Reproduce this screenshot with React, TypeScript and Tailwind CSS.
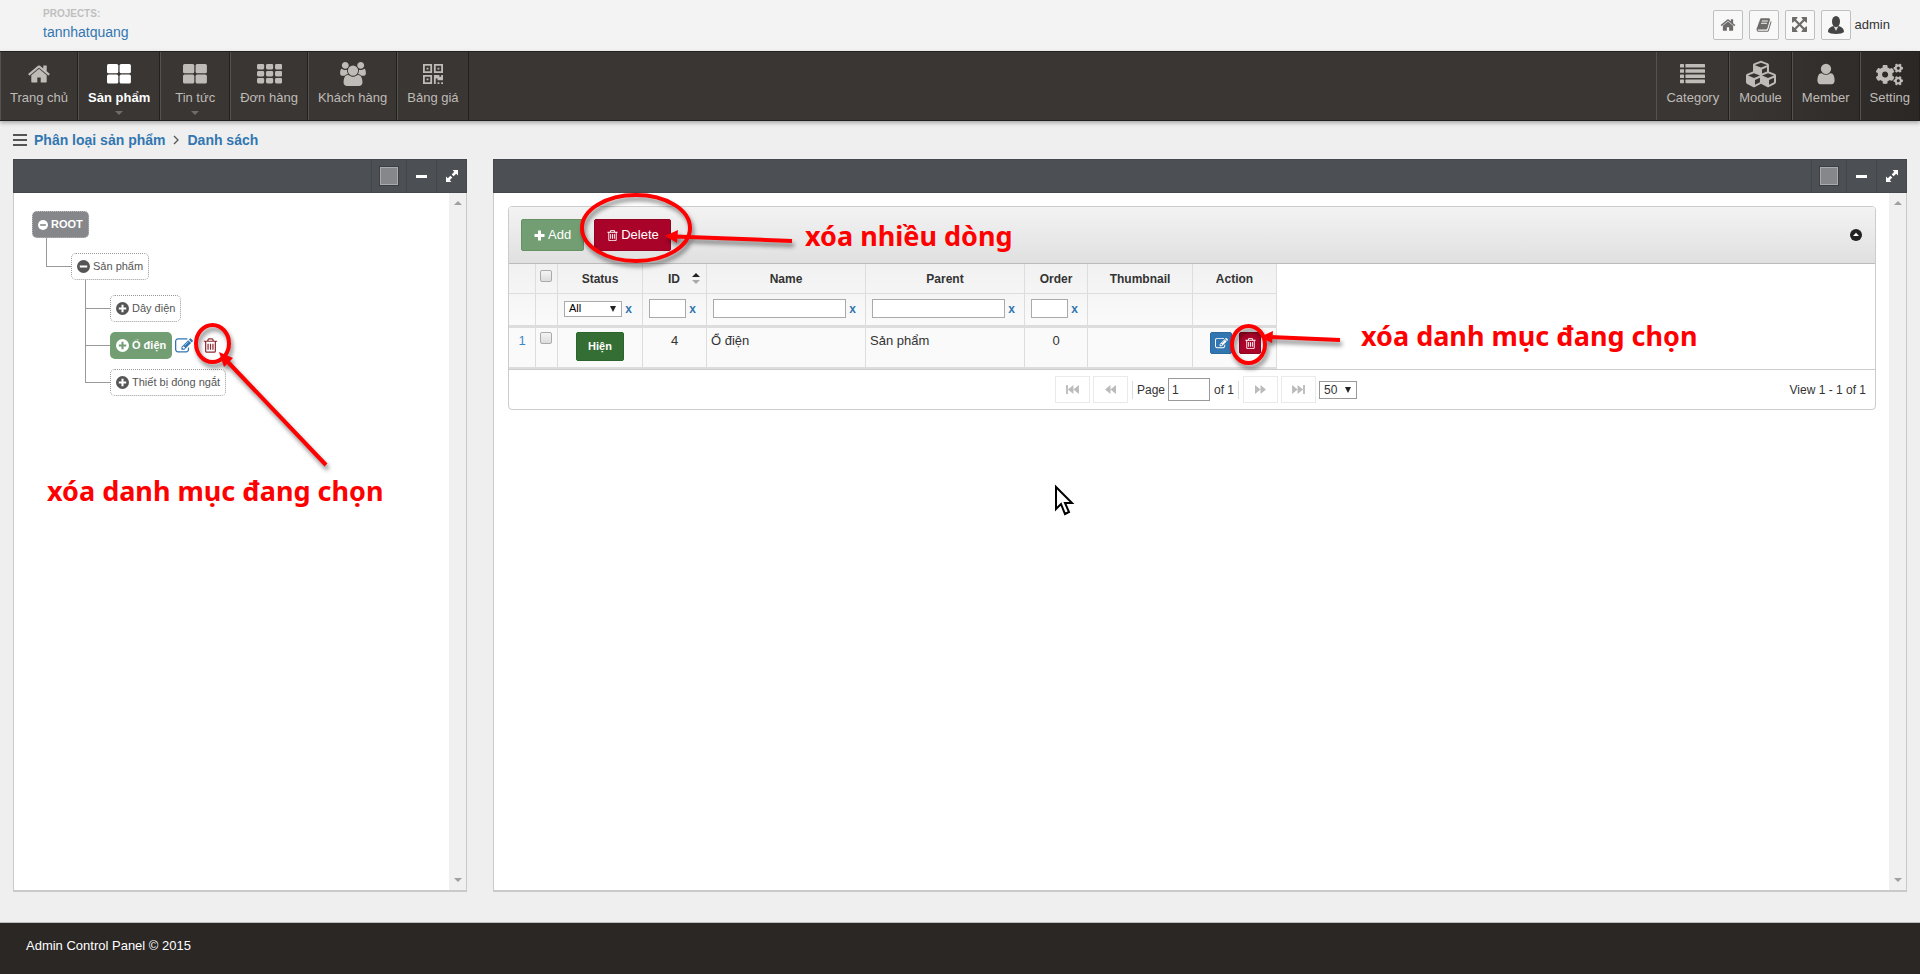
import React from "react";
import type { ReactNode } from "react";
import { FaCogs, FaCubes } from "react-icons/fa";

const P = {
  home: "M1472 992v480q0 26-19 45t-45 19h-384v-384h-256v384h-384q-26 0-45-19t-19-45v-480q0-1 .5-3t.5-3l575-474 575 474q1 2 1 6zm223-69l-62 74q-8 9-21 11h-3q-13 0-21-7l-692-577-692 577q-12 8-24 7-13-2-21-11l-62-74q-8-10-7-23.5t11-21.5l719-599q32-26 76-26t76 26l244 204v-195q0-14 9-23t23-9h192q14 0 23 9t9 23v408l219 182q10 8 11 21.5t-7 23.5z",
  trash: "M704 736v576q0 14-9 23t-23 9h-64q-14 0-23-9t-9-23v-576q0-14 9-23t23-9h64q14 0 23 9t9 23zm256 0v576q0 14-9 23t-23 9h-64q-14 0-23-9t-9-23v-576q0-14 9-23t23-9h64q14 0 23 9t9 23zm256 0v576q0 14-9 23t-23 9h-64q-14 0-23-9t-9-23v-576q0-14 9-23t23-9h64q14 0 23 9t9 23zm128 724v-948h-896v948q0 22 7 40.5t14.5 27 10.5 8.5h832q3 0 10.5-8.5t14.5-27 7-40.5zm-672-1076h448l-48-117q-7-9-17-11h-317q-10 2-17 11zm928 32v64q0 14-9 23t-23 9h-96v948q0 83-47 143.5t-113 60.5h-832q-66 0-113-58.5t-47-141.5v-952h-96q-14 0-23-9t-9-23v-64q0-14 9-23t23-9h309l70-167q15-37 54-63t79-26h320q40 0 79 26t54 63l70 167h309q14 0 23 9t9 23z",
  edit: "M888 1184l116-116-152-152-116 116v56h96v96h56zm440-720q-16-16-33 1l-350 350q-17 17-1 33t33-1l350-350q17-17 1-33zm80 594v190q0 119-84.5 203.5t-203.5 84.5h-832q-119 0-203.5-84.5t-84.5-203.5v-832q0-119 84.5-203.5t203.5-84.5h832q63 0 117 25 15 7 18 23 3 17-9 29l-49 49q-14 14-32 8-23-6-45-6h-832q-66 0-113 47t-47 113v832q0 66 47 113t113 47h832q66 0 113-47t47-113v-126q0-13 9-22l64-64q15-15 35-7t20 29zm-96-738l288 288-672 672h-288v-288zm444 132l-92 92-288-288 92-92q28-28 68-28t68 28l152 152q28 28 28 68t-28 68z",
  users: "M593 896q-162 5-265 128h-134q-82 0-138-40.5t-56-118.5q0-353 124-353 6 0 43.5 21t97.5 42.5 119 21.5q67 0 133-23-5 37-5 66 0 139 81 256zm1071 637q0 120-73 189.5t-194 69.5h-874q-121 0-194-69.5t-73-189.5q0-53 3.5-103.5t14-109 26.5-108.5 43-97.5 62-81 85.5-53.5 111.5-20q10 0 43 21.5t73 48 107 48 135 21.5 135-21.5 107-48 73-48 43-21.5q61 0 111.5 20t85.5 53.5 62 81 43 97.5 26.5 108.5 14 109 3.5 103.5zm-1024-1277q0 106-75 181t-181 75-181-75-75-181 75-181 181-75 181 75 75 181zm704 384q0 159-112.5 271.5t-271.5 112.5-271.5-112.5-112.5-271.5 112.5-271.5 271.5-112.5 271.5 112.5 112.5 271.5zm576 225q0 78-56 118.5t-138 40.5h-134q-103-123-265-128 81-117 81-256 0-29-5-66 66 23 133 23 59 0 119-21.5t97.5-42.5 43.5-21q124 0 124 353zm-128-609q0 106-75 181t-181 75-181-75-75-181 75-181 181-75 181 75 75 181z",
  book: "M1703 478q40 57 18 129l-275 906q-19 64-76.5 107.5t-122.5 43.5h-923q-77 0-148.5-53.5t-99.5-131.5q-24-67-2-127 0-4 3-27t4-37q1-8-3-21.5t-3-19.5q2-11 8-21t16.5-23.5 16.5-23.5q23-38 45-91.5t30-91.5q3-10 .5-30t-.5-28q3-11 17-28t17-23q21-36 42-92t25-90q1-9-2.5-32t.5-28q4-13 22-30.5t22-22.5q19-26 42.5-84.5t27.5-96.5q1-8-3-25.5t-2-26.5q2-8 9-18t18-23 17-21q8-12 16.5-30.5t15-35 16-36 19.5-32 26.5-23.5 36-11.5 47.5 5.5l-1 3q38-9 51-9h761q74 0 114 56t18 130l-274 906q-36 119-71.5 153.5t-128.5 34.5h-869q-27 0-38 15-11 16-1 43 24 70 144 70h923q29 0 56-15.5t35-41.5l300-987q7-22 5-57 38 15 59 43zm-1064 2q-4 13 2 22.5t20 9.5h608q13 0 25.5-9.5t16.5-22.5l21-64q4-13-2-22.5t-20-9.5h-608q-13 0-25.5 9.5t-16.5 22.5zm-83 256q-4 13 2 22.5t20 9.5h608q13 0 25.5-9.5t16.5-22.5l21-64q4-13-2-22.5t-20-9.5h-608q-13 0-25.5 9.5t-16.5 22.5z",
  arrows: "M1283 413l-355 355 355 355 144-144q29-31 70-14 39 17 39 59v448q0 26-19 45t-45 19h-448q-42 0-59-40-17-39 14-69l144-144-355-355-355 355 144 144q31 30 14 69-17 40-59 40h-448q-26 0-45-19t-19-45v-448q0-42 40-59 39-17 69 14l144 144 355-355-355-355-144 144q-19 19-45 19-12 0-24-5-40-17-40-59v-448q0-26 19-45t45-19h448q42 0 59 40 17 39-14 69l-144 144 355 355 355-355-144-144q-31-30-14-69 17-40 59-40h448q26 0 45 19t19 45v448q0 42-39 59-13 5-25 5-26 0-45-19z",
  user: "M1536 1399q0 109-62.5 187t-150.5 78h-854q-88 0-150.5-78t-62.5-187q0-85 8.5-160.5t31.5-152 58.5-131 94-89 134.5-34.5q131 128 313 128t313-128q76 0 134.5 34.5t94 89 58.5 131 31.5 152 8.5 160.5zm-256-887q0 159-112.5 271.5t-271.5 112.5-271.5-112.5-112.5-271.5 112.5-271.5 271.5-112.5 271.5 112.5 112.5 271.5z",
};

function Glyph({ d, box = "0 0 1792 1792", className }: { d: string; box?: string; className: string }) {
  return (
    <svg viewBox={box} className={className} fill="currentColor" aria-hidden="true">
      <path d={d} />
    </svg>
  );
}

const ThLarge = () => (
  <svg viewBox="0 0 24 20" className="h-5 w-6" fill="currentColor" aria-hidden="true">
    <rect x="0" y="0" width="11.3" height="9.3" rx="1.6" />
    <rect x="12.6" y="0" width="11.3" height="9.3" rx="1.6" />
    <rect x="0" y="10.6" width="11.3" height="9" rx="1.6" />
    <rect x="12.6" y="10.6" width="11.3" height="9" rx="1.6" />
  </svg>
);

const Th = () => (
  <svg viewBox="0 0 25 20" className="h-5 w-[25px]" fill="currentColor" aria-hidden="true">
    {[0, 7, 14].map((y) =>
      [0, 9, 18].map((x) => <rect key={`${x}-${y}`} x={x} y={y} width="7.2" height="5.4" rx="1.4" />)
    )}
  </svg>
);

const ListIcon = () => (
  <svg viewBox="0 0 25 20" className="h-5 w-[25px]" fill="currentColor" aria-hidden="true">
    {[0, 5.2, 10.4, 15.6].map((y) => (
      <g key={y}>
        <rect x="0" y={y} width="4" height="3.6" rx="0.6" />
        <rect x="5.4" y={y} width="19.6" height="3.6" rx="0.6" />
      </g>
    ))}
  </svg>
);

const QrIcon = () => (
  <svg viewBox="0 0 22 22" className="h-5 w-5" fill="currentColor" aria-hidden="true">
    <path
      fillRule="evenodd"
      d="M0 0h10v10H0zM2 2v6h6V2zM12 0h10v10H12zM14 2v6h6V2zM0 12h10v10H0zM2 14v6h6v-6z"
    />
    <path d="M4 4h2v2H4zM16 4h2v2h-2zM4 16h2v2H4zM12 12h6v2h2v-2h2v6h-6v-2h-2v6h-2zM16 20h2v2h-2zM20 20h2v2h-2z" />
  </svg>
);

type NavEntry = { label: string; icon: ReactNode; active?: boolean; menu?: boolean };

const leftNav: NavEntry[] = [
  { label: "Trang chủ", icon: <Glyph d={P.home} className="size-6" /> },
  { label: "Sản phẩm", icon: <ThLarge />, active: true, menu: true },
  { label: "Tin tức", icon: <ThLarge />, menu: true },
  { label: "Đơn hàng", icon: <Th /> },
  { label: "Khách hàng", icon: <Glyph d={P.users} box="0 0 1920 1792" className="h-6 w-[26px]" /> },
  { label: "Bảng giá", icon: <QrIcon /> },
];

const rightNav: NavEntry[] = [
  { label: "Category", icon: <ListIcon /> },
  { label: "Module", icon: <FaCubes className="size-[30px]" /> },
  { label: "Member", icon: <Glyph d={P.user} className="size-6" /> },
  { label: "Setting", icon: <FaCogs className="size-[27px]" /> },
];

function NavItem({ label, icon, active, menu }: NavEntry) {
  return (
    <a
      href="#"
      className={`flex flex-col items-center border-r border-r-[#22201e] border-l border-l-[#55514e] px-[9px] pt-2 text-[13px] leading-4 ${
        menu ? "min-w-[70px]" : ""
      } ${active ? "font-bold text-white" : "text-[#bfbbb7]"}`}
    >
      <span className="flex h-7 items-center justify-center">{icon}</span>
      <span className="mt-[2px]">{label}</span>
      {menu && <span className="mt-[5px] border-x-4 border-t-4 border-x-transparent border-t-[#6f6c69]" />}
    </a>
  );
}

function Panel({ label, className, children }: { label: string; className: string; children: ReactNode }) {
  return (
    <section aria-label={label} className={`flex flex-col ${className}`}>
      <header className="flex h-[34px] shrink-0 justify-end border border-[#44474b] bg-[#4c4f53] text-white">
        <div className="flex w-[35px] items-center justify-center border-l border-[#424549]">
          <button aria-label="Colour" className="size-[18px] border border-[#a9abad] bg-[#86878b] outline outline-[#3c3f43]" />
        </div>
        <button aria-label="Collapse" className="flex w-[30px] items-center justify-center border-l border-[#424549]">
          <span className="h-[3px] w-[11px] bg-white" />
        </button>
        <button aria-label="Fullscreen" className="flex w-[30px] items-center justify-center border-l border-[#424549]">
          <svg viewBox="0 0 14 14" className="size-[14px]" aria-hidden="true">
            <path d="M7.5 1H13v5.5l-1.8-1.8-2.6 2.6-1.9-1.9 2.6-2.6zM6.5 13H1V7.500l1.800 1.800 2.600-2.600 1.900 1.900-2.600 2.600z" fill="#fff" />
          </svg>
        </button>
      </header>
      <div className="flex flex-1 border-x border-b-2 border-[#c9c9c9] bg-white">
        <div className="min-w-0 flex-1">{children}</div>
        <div className="flex w-[17px] flex-col items-center justify-between bg-[#f0f0f0] py-2">
          <span className="border-x-4 border-b-4 border-x-transparent border-b-[#a0a0a0]" />
          <span className="border-x-4 border-t-4 border-x-transparent border-t-[#a0a0a0]" />
        </div>
      </div>
    </section>
  );
}

function Sign({ minus, small, bar }: { minus?: boolean; small?: boolean; bar: string }) {
  return (
    <svg viewBox="0 0 14 14" className={small ? "size-[10px]" : "size-[13px]"} aria-hidden="true">
      <circle cx="7" cy="7" r="7" fill="currentColor" />
      <path d={minus ? "M3 7h8" : "M3 7h8M7 3v8"} stroke={bar} strokeWidth="2.2" />
    </svg>
  );
}

function TreeItem({ first, last, children }: { first?: boolean; last?: boolean; children: ReactNode }) {
  return (
    <li className="flex">
      <div className="flex w-[25px] shrink-0 flex-col">
        <div className={`border-b border-l border-[#999] ${first ? "h-[29px]" : "h-6"}`} />
        {!last && <div className="flex-1 border-l border-[#999]" />}
      </div>
      <div className={first ? "pt-[15px]" : "pt-[10px]"}>{children}</div>
    </li>
  );
}

const nodeBase = "flex h-[27px] items-center gap-[3px] rounded-[5px] border border-dotted px-[5px] text-[11px]";
const nodePlain = `${nodeBase} border-[#999] bg-white text-[#555]`;

function Tree() {
  return (
    <div className="pt-[18px] pl-[18px]">
      <button className={`${nodeBase} border-[#bbb] bg-[#86878b] font-bold text-white`}>
        <Sign minus small bar="#86878b" />
        ROOT
      </button>
      <ul className="pl-[14px]">
        <TreeItem first last>
          <button className={nodePlain}>
            <Sign minus bar="#fff" />
            Sản phẩm
          </button>
          <ul className="pl-[14px]">
            <TreeItem first>
              <button className={nodePlain}>
                <Sign bar="#fff" />
                Dây điện
              </button>
            </TreeItem>
            <TreeItem>
              <div className="flex items-center">
                <button className={`${nodeBase} border-[#71a575] bg-[#739e73] font-bold text-white`}>
                  <Sign bar="#739e73" />
                  Ổ điện
                </button>
                <button aria-label="Sửa" className="ml-[3px] text-[#3276b1]">
                  <Glyph d={P.edit} className="size-[18px]" />
                </button>
                <button aria-label="Xóa" className="ml-[9px] text-[#8f2b30]">
                  <Glyph d={P.trash} className="size-[17px]" />
                </button>
              </div>
            </TreeItem>
            <TreeItem last>
              <button className={nodePlain}>
                <Sign bar="#fff" />
                Thiết bị đóng ngắt
              </button>
            </TreeItem>
          </ul>
        </TreeItem>
      </ul>
    </div>
  );
}

const head = "border-r border-b border-[#ddd] text-xs font-bold";
const cell = "border-r border-y-2 border-[#ddd] pt-1 align-top text-[13px] leading-[18px]";
const field = "h-[19px] border border-[#aaa] bg-white text-xs";
const tick =
  "ml-1 block size-3 appearance-none rounded-[2px] border border-[#aaa] bg-linear-to-b from-[#f4f4f4] to-[#dcdcdc]";

function Clear() {
  return <button className="w-[13px] text-center text-xs font-bold text-[#3276b1]">x</button>;
}

function Filter({ label, width }: { label: string; width: string }) {
  return (
    <th className={head}>
      <div className="flex items-center pb-[2px] pl-[6px]">
        <input aria-label={label} className={`${field} ${width}`} />
        <Clear />
      </div>
    </th>
  );
}

function DataTable() {
  return (
    <table className="w-[768px] table-fixed border-separate border-spacing-0 bg-[#fafafa]">
      <colgroup>
        <col className="w-[27px]" />
        <col className="w-[22px]" />
        <col className="w-[85px]" />
        <col className="w-[64px]" />
        <col className="w-[159px]" />
        <col className="w-[159px]" />
        <col className="w-[63px]" />
        <col className="w-[105px]" />
        <col className="w-[84px]" />
      </colgroup>
      <thead className="bg-linear-to-b from-[#f1f1f1] to-[#fafafa]">
        <tr className="h-[30px]">
          <th className={head} />
          <th className={head}>
            <input type="checkbox" aria-label="Chọn tất cả" className={`${tick} mb-[6px]`} />
          </th>
          <th className={head}>Status</th>
          <th className={head}>
            <span className="flex items-center justify-end gap-3 pr-[6px]">
              ID
              <span className="flex flex-col gap-[3px]">
                <span className="border-x-4 border-b-4 border-x-transparent border-b-[#222]" />
                <span className="border-x-4 border-t-4 border-x-transparent border-t-[#aaa]" />
              </span>
            </span>
          </th>
          <th className={head}>Name</th>
          <th className={head}>Parent</th>
          <th className={head}>Order</th>
          <th className={head}>Thumbnail</th>
          <th className={head}>Action</th>
        </tr>
        <tr className="h-8">
          <th className={head} />
          <th className={head} />
          <th className={head}>
            <div className="flex items-center pb-[2px] pl-[6px]">
              <div className="grid w-[58px] items-center">
                <select aria-label="Status" className="col-start-1 row-start-1 h-4 appearance-none border border-[#aaa] bg-white pl-1 text-[11px] leading-none font-normal text-black">
                  <option>All</option>
                </select>
                <span className="pointer-events-none col-start-1 row-start-1 mr-[6px] justify-self-end border-x-3 border-t-6 border-x-transparent border-t-[#222]" />
              </div>
              <Clear />
            </div>
          </th>
          <Filter label="ID" width="w-[37px]" />
          <Filter label="Name" width="w-[133px]" />
          <Filter label="Parent" width="w-[133px]" />
          <Filter label="Order" width="w-[37px]" />
          <th className={head} />
          <th className={head} />
        </tr>
      </thead>
      <tbody>
        <tr className="h-[43px]">
          <td className={`${cell} text-center text-[#3a87c8]`}>1</td>
          <td className={cell}>
            <input type="checkbox" aria-label="Chọn dòng 1" className={tick} />
          </td>
          <td className={cell}>
            <button className="mx-auto block h-[29px] w-12 rounded-[2px] border border-[#2c642d] bg-[#356e35] text-[11px] leading-none font-bold text-white">
              Hiện
            </button>
          </td>
          <td className={`${cell} text-center`}>4</td>
          <td className={`${cell} pl-1`}>Ổ điện</td>
          <td className={`${cell} pl-1`}>Sản phẩm</td>
          <td className={`${cell} text-center`}>0</td>
          <td className={cell} />
          <td className={cell}>
            <div className="flex gap-[7px] pl-[17px]">
              <button aria-label="Sửa" className="flex size-[22px] items-center justify-center rounded-[2px] border border-[#2c699d] bg-[#3276b1] text-white">
                <Glyph d={P.edit} className="size-[13px]" />
              </button>
              <button aria-label="Xóa" className="flex size-[22px] items-center justify-center rounded-[2px] border border-[#900323] bg-[#a90329] text-white">
                <Glyph d={P.trash} className="size-[13px]" />
              </button>
            </div>
          </td>
        </tr>
      </tbody>
    </table>
  );
}

function PageButton({ label, d }: { label: string; d: string }) {
  return (
    <button aria-label={label} className="flex h-[27px] w-[35px] items-center justify-center border border-[#eaeaea] text-[#bbb]">
      <svg viewBox="0 0 14 12" className="h-[11px] w-[13px]" fill="currentColor" aria-hidden="true">
        <path d={d} />
      </svg>
    </button>
  );
}

function Pager() {
  return (
    <div className="grid h-10 grid-cols-[1fr_auto_1fr] items-center border-t border-[#ccc] text-xs">
      <span />
      <div className="flex items-center pl-7">
        <PageButton label="First" d="M0 1h2v10H0zM8 1v10L2 6zM14 1v10L8 6z" />
        <span className="w-[3px]" />
        <PageButton label="Previous" d="M7 1v10L1 6zM13 1v10L7 6z" />
        <span className="mx-1 h-[18px] border-l border-[#ddd]" />
        <label className="flex items-center gap-[3px]">
          Page
          <input defaultValue="1" className="h-[23px] w-[42px] border border-[#999] bg-white px-[3px]" />
        </label>
        <span className="ml-1">of 1</span>
        <span className="mx-1 h-[18px] border-l border-[#ddd]" />
        <PageButton label="Next" d="M1 1v10l6-5zM7 1v10l6-5z" />
        <span className="w-[3px]" />
        <PageButton label="Last" d="M0 1v10l6-5zM6 1v10l6-5zM12 1h2v10h-2z" />
        <div className="ml-[3px] grid w-[38px] items-center">
          <select aria-label="Rows per page" className="col-start-1 row-start-1 h-[18px] appearance-none border border-[#999] bg-white pl-1 leading-none">
            <option>50</option>
          </select>
          <span className="pointer-events-none col-start-1 row-start-1 mr-[6px] justify-self-end border-x-3 border-t-6 border-x-transparent border-t-[#222]" />
        </div>
      </div>
      <span className="pr-[9px] text-right">View 1 - 1 of 1</span>
    </div>
  );
}

function GridBox() {
  return (
    <div className="mt-[13px] mr-[13px] ml-[14px] overflow-hidden rounded border border-[#ccc]">
      <div className="flex h-[57px] items-center border-b border-[#bbb] bg-linear-to-b from-[#f3f3f3] to-[#e0e0e0] pl-3 text-[13px] text-white">
        <button className="flex h-8 items-center gap-[3px] rounded-[2px] border border-[#659265] bg-[#739e73] px-3">
          <svg viewBox="0 0 11 11" className="size-[11px]" aria-hidden="true">
            <path d="M5.500 0.500v10M0.500 5.500h10" stroke="#fff" strokeWidth="3" />
          </svg>
          Add
        </button>
        <button className="ml-[10px] flex h-8 items-center gap-[2px] rounded-[2px] border border-[#900323] bg-[#a90329] px-[11px]">
          <Glyph d={P.trash} className="size-[13px]" />
          Delete
        </button>
        <button aria-label="Toggle grid" className="mr-[13px] ml-auto">
          <svg viewBox="0 0 12 12" className="size-3" aria-hidden="true">
            <circle cx="6" cy="6" r="6" fill="#222" />
            <path d="M6 3.700L9 7H3z" fill="#fff" />
          </svg>
        </button>
      </div>
      <DataTable />
      <Pager />
    </div>
  );
}

const toolButton = "flex size-[30px] items-center justify-center rounded-[2px] border border-[#bfbfbf] bg-[#f8f8f8] text-[#6d6a69]";
const note = "absolute font-['Noto_Sans',sans-serif] text-[27px] leading-8 font-bold whitespace-nowrap text-[#f00]";

function Annotations() {
  return (
    <div className="pointer-events-none absolute inset-0">
      <svg className="absolute top-0 left-0 h-[600px] w-[1400px]" aria-hidden="true">
        <g
          className="drop-shadow-[2px_4px_2px_rgba(0,0,0,0.45)]"
          fill="none"
          stroke="#f00"
          strokeWidth="4"
        >
          <ellipse cx="636" cy="228" rx="54" ry="33" />
          <ellipse cx="212.500" cy="343.500" rx="16.500" ry="18.500" />
          <ellipse cx="1248.500" cy="344.500" rx="16.500" ry="18.500" />
          <path d="M792 241L675 236.500M326 465L226 360M1340 340L1270 337" />
          <g fill="#f00" stroke="none">
            <path d="M665 236l13-6-1 13z" />
            <path d="M219 352l14 6-9 9z" />
            <path d="M1260 337l13-6-1 12z" />
          </g>
        </g>
        <path d="M1056 487v22l5-5 4 10 4-2-4-9h7z" fill="#fff" stroke="#000" strokeWidth="2" />
      </svg>
      <p className={`${note} top-[475px] left-[47px]`}>xóa danh mục đang chọn</p>
      <p className={`${note} top-[220px] left-[805px]`}>xóa nhiều dòng</p>
      <p className={`${note} top-[320px] left-[1361px]`}>xóa danh mục đang chọn</p>
    </div>
  );
}

export default function App() {
  return (
    <div className="relative flex min-h-screen flex-col bg-[#efefef] font-['Liberation_Sans',Arial,sans-serif] text-[#333]">
      <header className="flex h-[51px] items-center justify-between bg-[#f3f3f3] pr-[30px] pb-[2px] pl-[43px]">
        <div>
          <p className="text-[10px] leading-3 font-bold text-[#bfbfbf]">PROJECTS:</p>
          <a href="#" className="block pt-[2px] text-sm leading-5 text-[#3276b1]">tannhatquang</a>
        </div>
        <div className="flex items-center gap-[6px]">
          <button aria-label="Home" className={toolButton}>
            <Glyph d={P.home} className="size-4" />
          </button>
          <button aria-label="Guide" className={toolButton}>
            <Glyph d={P.book} className="size-4" />
          </button>
          <button aria-label="Full screen" className={toolButton}>
            <Glyph d={P.arrows} box="0 0 1536 1536" className="size-[15px]" />
          </button>
          <button className="flex items-center gap-1 text-[13px]">
            <span className={toolButton}>
              <svg viewBox="0 0 16 18" className="h-[18px] w-4" aria-hidden="true">
                <path d="M0 16c0-4 3-5 5-6h6c2 1 5 2 5 6-2 2.500-14 2.500-16 0z" fill="#444" />
                <path d="M5.500 10l2.500 5 2.500-5z" fill="#ddd" />
                <ellipse cx="8" cy="5.500" rx="4" ry="5.500" fill="#444" />
              </svg>
            </span>
            admin
          </button>
        </div>
      </header>
      <nav className="flex h-[70px] justify-between border-y border-[#22201e] bg-linear-to-r from-[#3a3633] from-90% to-[#2a2725] shadow-[0_2px_4px_rgba(0,0,0,0.3)]">
        <div className="flex">{leftNav.map((n) => <NavItem key={n.label} {...n} />)}</div>
        <div className="flex">{rightNav.map((n) => <NavItem key={n.label} {...n} />)}</div>
      </nav>
      <div className="flex h-[38px] items-center pl-[13px] text-sm font-bold text-[#3276b1]">
        <span className="mr-[7px] flex flex-col gap-[3px]">
          <span className="h-[2px] w-[14px] bg-[#555]" />
          <span className="h-[2px] w-[14px] bg-[#555]" />
          <span className="h-[2px] w-[14px] bg-[#555]" />
        </span>
        <a href="#">Phân loại sản phẩm</a>
        <svg viewBox="0 0 6 10" className="mx-2 h-[10px] w-[6px]" aria-hidden="true">
          <path d="M1 1l4 4-4 4" fill="none" stroke="#555" strokeWidth="1.300" />
        </svg>
        <a href="#">Danh sách</a>
      </div>
      <main className="grid flex-1 grid-cols-4 gap-[26px] px-[13px] pb-[30px]">
        <Panel label="Phân loại" className="col-span-1">
          <Tree />
        </Panel>
        <Panel label="Danh sách" className="col-span-3">
          <GridBox />
        </Panel>
      </main>
      <footer className="h-[52px] border-t border-[#b9bdbf] bg-[#2a2725] pt-[13px] pl-[26px] text-[13px] leading-5 text-white">
        Admin Control Panel © 2015
      </footer>
      <Annotations />
    </div>
  );
}
